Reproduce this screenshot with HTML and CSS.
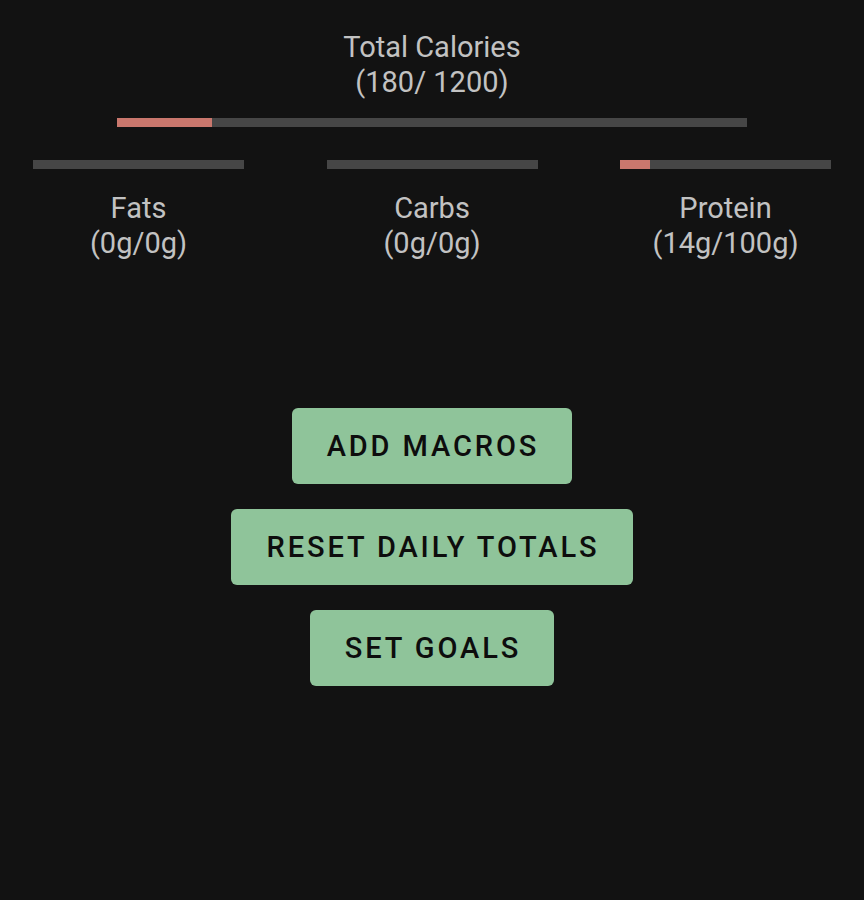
FILE: index.html
```html
<!DOCTYPE html>
<html>
<head>
<meta charset="utf-8">
<link rel="stylesheet" href="styles.css">
</head>
<body>
<div class="app">
  <section class="total">
    <div class="label">Total Calories<br>(180/ 1200)</div>
    <div class="bar bar-total"><div class="fill" style="width:15%"></div></div>
  </section>
  <section class="macros">
    <div class="macro">
      <div class="bar bar-macro"><div class="fill" style="width:0%"></div></div>
      <div class="label">Fats<br>(0g/0g)</div>
    </div>
    <div class="macro">
      <div class="bar bar-macro"><div class="fill" style="width:0%"></div></div>
      <div class="label">Carbs<br>(0g/0g)</div>
    </div>
    <div class="macro">
      <div class="bar bar-macro"><div class="fill" style="width:14%"></div></div>
      <div class="label">Protein<br>(14g/100g)</div>
    </div>
  </section>
  <section class="actions">
    <button class="btn">ADD MACROS</button>
    <button class="btn">RESET DAILY TOTALS</button>
    <button class="btn">SET GOALS</button>
  </section>
</div>
</body>
</html>
```

FILE: styles.css
```css
html, body {
  margin: 0;
  padding: 0;
  background: #121212;
}
body {
  width: 864px;
  height: 900px;
  font-family: Roboto, "Noto Sans", sans-serif;
  color: #c2c2c2;
}
.app {
  display: flex;
  flex-direction: column;
  align-items: center;
  padding-top: 30px;
}
.label {
  font-size: 29px;
  line-height: 35px;
  text-align: center;
}
.total {
  display: flex;
  flex-direction: column;
  align-items: center;
}
.bar {
  background: #464646;
  height: 9px;
  position: relative;
  overflow: hidden;
}
.fill {
  height: 100%;
  background: #c9776d;
}
.bar-total {
  width: 630px;
  margin-top: 18px;
}
.macros {
  display: flex;
  justify-content: space-between;
  width: 798px;
  margin-top: 33px;
}
.macro {
  width: 211px;
  display: flex;
  flex-direction: column;
  align-items: center;
}
.bar-macro {
  width: 211px;
}
.macro .label {
  margin-top: 22px;
}
.actions {
  display: flex;
  flex-direction: column;
  align-items: center;
  gap: 25px;
  margin-top: 147px;
}
.btn {
  font-family: Roboto, "Noto Sans", sans-serif;
  font-weight: 500;
  font-size: 29px;
  letter-spacing: 2.9px;
  color: #0d0d0d;
  background: #8fc49a;
  border: none;
  border-radius: 6px;
  height: 76px;
  padding: 0 33px 0 35px;
}
```
